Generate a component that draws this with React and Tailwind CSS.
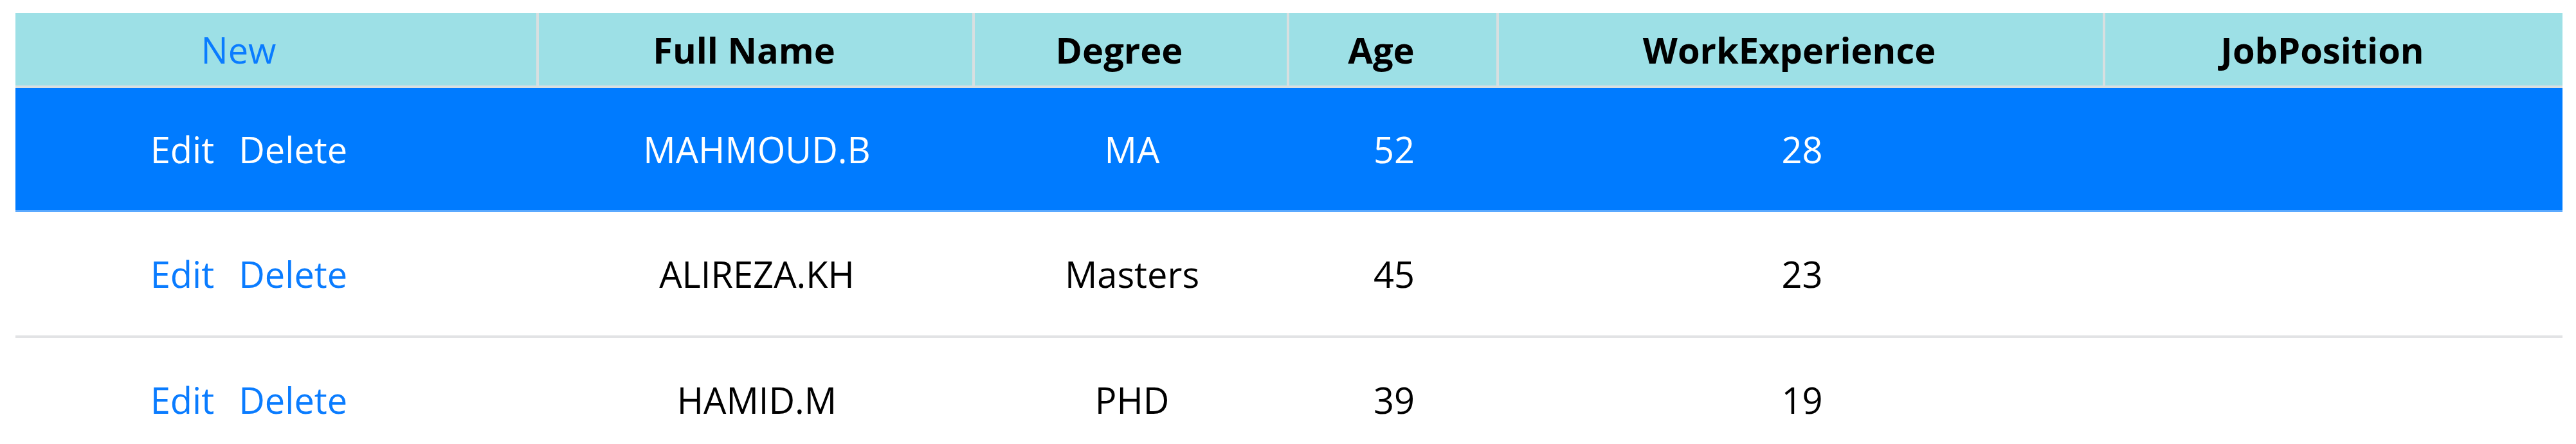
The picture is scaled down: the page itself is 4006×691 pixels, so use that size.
import React from 'react';

const employees = [
    { id: 1, name: 'MAHMOUD.B', degree: 'MA', age: 52, experience: 28, job: '', selected: true },
    { id: 2, name: 'ALIREZA.KH', degree: 'Masters', age: 45, experience: 23, job: '' },
    { id: 3, name: 'HAMID.M', degree: 'PHD', age: 39, experience: 19, job: '' },
];

const headers = ['Full Name', 'Degree', 'Age', 'WorkExperience', 'JobPosition'];

export default function App() {
    return (
        <div className="w-[4006px] h-[691px] overflow-hidden bg-white pt-[20px] pl-[24px] font-['Open_Sans',sans-serif] text-[56px] text-black">
            <div className="w-[3961px] grid grid-cols-[814px_678px_489px_326px_943px_711px]">
                {/* Header */}
                <div className="h-[117px] bg-[#9de0e6] border-b-4 border-r-4 border-[#d8dfe0] flex items-center justify-center pr-[116px]">
                    <a href="#" className="text-[#0a7cff]">New</a>
                </div>
                {headers.map((h, i) => (
                    <div
                        key={h}
                        className={`h-[117px] bg-[#9de0e6] border-b-4 border-[#d8dfe0] flex items-center justify-center pr-[36px] font-bold ${i < headers.length - 1 ? 'border-r-4' : ''}`}
                    >
                        {h}
                    </div>
                ))}

                {/* Rows */}
                {employees.map((e, idx) => {
                    const rowCls = e.selected
                        ? 'bg-[#007bff] text-white h-[193px] border-b-[3px] border-[#5aa9ff]'
                        : idx === 1
                            ? 'bg-white h-[196px] border-b-4 border-[#e2e3e5]'
                            : 'bg-white h-[192px]';
                    const linkCls = e.selected ? 'text-white' : 'text-[#0a7cff]';
                    return (
                        <React.Fragment key={e.id}>
                            <div className={`${rowCls} flex items-center justify-center gap-[38px] pr-[88px]`}>
                                <a href="#" className={linkCls}>Edit</a>
                                <a href="#" className={linkCls}>Delete</a>
                            </div>
                            <div className={`${rowCls} flex items-center justify-center`}>{e.name}</div>
                            <div className={`${rowCls} flex items-center justify-center`}>{e.degree}</div>
                            <div className={`${rowCls} flex items-center justify-center`}>{e.age}</div>
                            <div className={`${rowCls} flex items-center justify-center`}>{e.experience}</div>
                            <div className={`${rowCls} flex items-center justify-center`}>{e.job}</div>
                        </React.Fragment>
                    );
                })}
            </div>
        </div>
    );
}
